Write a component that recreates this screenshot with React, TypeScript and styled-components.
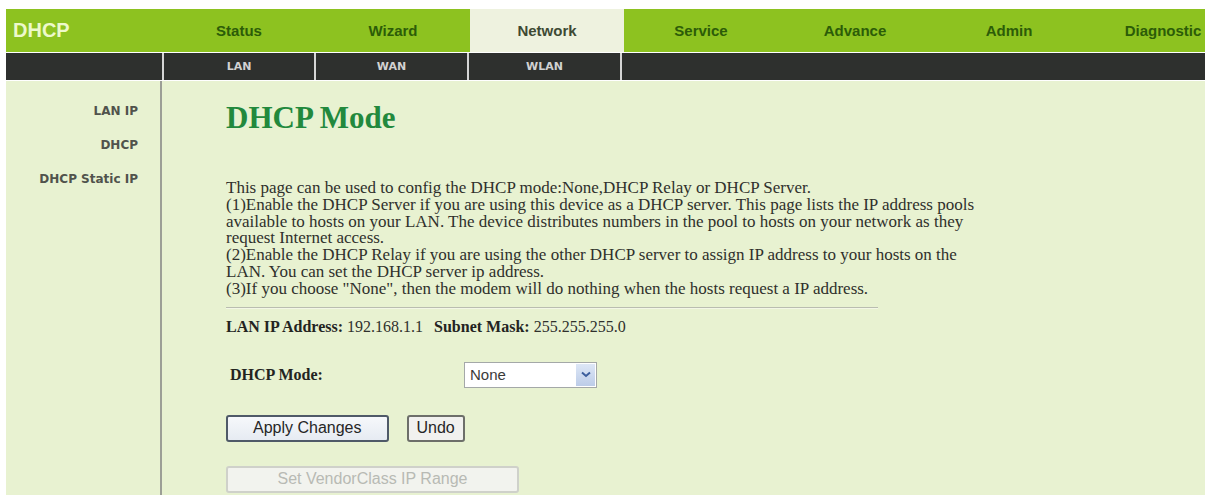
import React from 'react'
import styled, { createGlobalStyle } from 'styled-components'

const GlobalStyle = createGlobalStyle`
  html, body {
    margin: 0;
    padding: 0;
    background: #ffffff;
    overflow: hidden;
  }
`

const tabs = ['Status', 'Wizard', 'Network', 'Service', 'Advance', 'Admin', 'Diagnostic']
const subTabs = ['LAN', 'WAN', 'WLAN']
const sideLinks = ['LAN IP', 'DHCP', 'DHCP Static IP']

const App: React.FC = () => {
  return (
    <>
      <GlobalStyle />
      <Page>
        <TopNav>
          <Brand>DHCP</Brand>
          {tabs.map(t => (
            <Tab key={t} $active={t === 'Network'}>{t}</Tab>
          ))}
        </TopNav>
        <SubNav>
          <SubCell />
          {subTabs.map(t => (
            <SubCell key={t} $sep>{t}</SubCell>
          ))}
          <SubCell $sep />
        </SubNav>
        <Body>
          <Sidebar>
            {sideLinks.map(l => (
              <SideLink key={l}>{l}</SideLink>
            ))}
          </Sidebar>
          <Main>
            <Title>DHCP Mode</Title>
            <Intro>
              This page can be used to config the DHCP mode:None,DHCP Relay or DHCP Server.<br />
              (1)Enable the DHCP Server if you are using this device as a DHCP server. This page lists the IP address pools<br />
              available to hosts on your LAN. The device distributes numbers in the pool to hosts on your network as they<br />
              request Internet access.<br />
              (2)Enable the DHCP Relay if you are using the other DHCP server to assign IP address to your hosts on the<br />
              LAN. You can set the DHCP server ip address.<br />
              (3)If you choose "None", then the modem will do nothing when the hosts request a IP address.
            </Intro>
            <Rule />
            <InfoLine>
              <b>LAN IP Address:</b> 192.168.1.1
              <InfoGap><b>Subnet Mask:</b> 255.255.255.0</InfoGap>
            </InfoLine>
            <FormRow>
              <FieldLabel>DHCP Mode:</FieldLabel>
              <Select>
                <SelectValue>None</SelectValue>
                <SelectArrow>
                  <svg width="10" height="7" viewBox="0 0 10 7">
                    <path d="M1 1.5 L5 5 L9 1.5" fill="none" stroke="#3b5d9c" strokeWidth="2" />
                  </svg>
                </SelectArrow>
              </Select>
            </FormRow>
            <ButtonRow>
              <Button $primary>Apply Changes</Button>
              <Button>Undo</Button>
            </ButtonRow>
            <ButtonRow $gap={24}>
              <Button $disabled>Set VendorClass IP Range</Button>
            </ButtonRow>
          </Main>
        </Body>
      </Page>
    </>
  )
}

const Page = styled.div`
  width: 1212px;
  height: 495px;
  box-sizing: border-box;
  padding: 9px 7px 0 6px;
  display: flex;
  flex-direction: column;
  overflow: hidden;
`

const TopNav = styled.div`
  display: grid;
  grid-template-columns: 156px repeat(7, 154px);
  height: 43px;
  background: #8dc220;
  overflow: hidden;
  font-family: "Liberation Sans", Arial, sans-serif;
`

const Brand = styled.div`
  padding-left: 7px;
  line-height: 43px;
  font-size: 20px;
  font-weight: bold;
  color: #edf9cb;
`

const Tab = styled.div<{ $active?: boolean }>`
  line-height: 43px;
  text-align: center;
  white-space: nowrap;
  font-size: 15px;
  font-weight: bold;
  color: ${p => (p.$active ? '#3e4a34' : '#2c5c08')};
  background: ${p => (p.$active ? '#eef2df' : 'transparent')};
`

const SubNav = styled.div`
  display: grid;
  grid-template-columns: 156px 152px 153px 153px 1fr;
  height: 27px;
  margin-top: 1px;
  background: #2e302e;
`

const SubCell = styled.div<{ $sep?: boolean }>`
  border-left: ${p => (p.$sep ? '2px solid #d6d6d6' : 'none')};
  line-height: 27px;
  text-align: center;
  font-family: "DejaVu Sans", Verdana, sans-serif;
  font-size: 11px;
  font-weight: bold;
  color: #d2d2d2;
`

const Body = styled.div`
  flex: 1;
  display: flex;
  margin-top: 1px;
  background: #e8f2d1;
`

const Sidebar = styled.div`
  width: 156px;
  flex-shrink: 0;
  border-right: 2px solid #9c9f96;
  padding: 22px 22px 0 0;
  box-sizing: border-box;
  display: flex;
  flex-direction: column;
  align-items: flex-end;
  gap: 18px;
`

const SideLink = styled.div`
  font-family: "DejaVu Sans", Verdana, sans-serif;
  font-size: 12px;
  font-weight: bold;
  line-height: 16px;
  color: #50534c;
  white-space: nowrap;
`

const Main = styled.div`
  flex: 1;
  padding-left: 64px;
  font-family: "Liberation Serif", "Times New Roman", serif;
  color: #2f302c;
`

const Title = styled.h1`
  margin: 19px 0 0;
  font-size: 31px;
  line-height: 36px;
  font-weight: bold;
  color: #22893d;
`

const Intro = styled.p`
  margin: 44px 0 0;
  font-size: 17px;
  line-height: 16.8px;
  white-space: nowrap;
`

const Rule = styled.div`
  width: 652px;
  height: 1px;
  margin-top: 9px;
  border-top: 1px solid #b9bdb0;
  background: #f3f7e6;
`

const InfoLine = styled.div`
  margin-top: 9px;
  font-size: 16px;
  line-height: 18px;
  white-space: nowrap;
  b {
    color: #23241f;
  }
`

const InfoGap = styled.span`
  margin-left: 11px;
`

const FormRow = styled.div`
  display: flex;
  align-items: center;
  margin-top: 26px;
  height: 26px;
`

const FieldLabel = styled.div`
  width: 238px;
  padding-left: 4px;
  box-sizing: border-box;
  font-size: 16px;
  font-weight: bold;
  color: #23241f;
`

const Select = styled.div`
  width: 133px;
  height: 26px;
  box-sizing: border-box;
  border: 1px solid #a4a8a8;
  background: #ffffff;
  display: flex;
  align-items: stretch;
`

const SelectValue = styled.div`
  flex: 1;
  padding-left: 5px;
  line-height: 24px;
  font-family: "Liberation Sans", Arial, sans-serif;
  font-size: 15px;
  color: #3a3a3a;
`

const SelectArrow = styled.div`
  width: 19px;
  margin: 1px;
  background: linear-gradient(#dde7f6, #bccce8);
  display: flex;
  align-items: center;
  justify-content: center;
`

const ButtonRow = styled.div<{ $gap?: number }>`
  display: flex;
  gap: 18px;
  margin-top: ${p => p.$gap ?? 27}px;
`

const Button = styled.button<{ $primary?: boolean; $disabled?: boolean }>`
  height: 27px;
  padding: 0 ${p => (p.$primary ? 25 : 8)}px;
  ${p => p.$disabled && 'width: 293px;'}
  box-sizing: border-box;
  font-family: "Liberation Sans", Arial, sans-serif;
  font-size: 16px;
  color: ${p => (p.$disabled ? '#b8bab4' : '#262626')};
  background: ${p => (p.$primary ? 'linear-gradient(#f6f8fb, #e6ebf2)' : p.$disabled ? '#f2f3ee' : '#f1f1ef')};
  border: ${p => (p.$primary ? '2px solid #4f5a68' : p.$disabled ? '2px solid #cfd1ca' : '2px solid #6d6f6a')};
  border-radius: 3px;
`

export default App
